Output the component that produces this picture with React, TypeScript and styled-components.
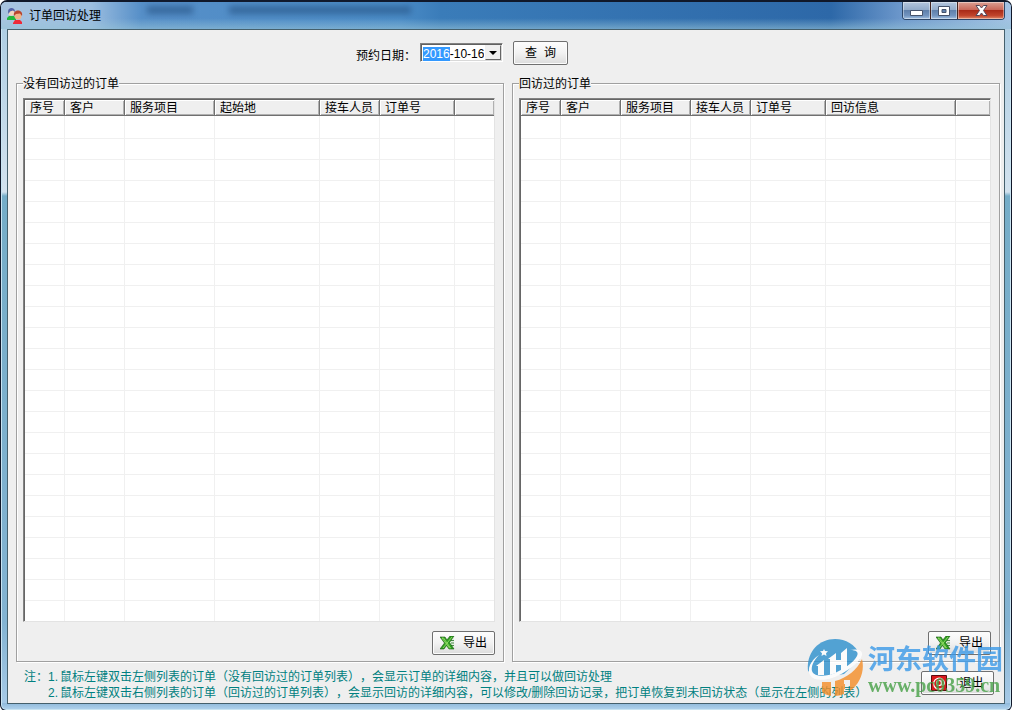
import React, { useEffect, useRef } from 'react';
import styled, { createGlobalStyle, css } from 'styled-components';

const Global = createGlobalStyle`
  *, *::before, *::after { box-sizing: border-box; }
  html, body, #root { height: 100%; }
  body {
    margin: 0;
    background: #fff;
    color: #000;
    font: 12px/16px "Liberation Sans", "Noto Sans CJK SC", sans-serif;
    text-spacing-trim: space-all;
  }
  button, input { font: inherit; color: inherit; }
`;

const Window = styled.div`
  position: relative;
  display: flex;
  flex-direction: column;
  min-height: 100%;
  padding: 0 6px 6px;
  border: 1px solid #10182a;
  border-top-width: 2px;
  border-radius: 7px 7px 6px 6px;
  background:
    linear-gradient(#8fb9da, #b3d4ee) 0 100% / 100% 7px no-repeat,
    linear-gradient(#a9cbe2, #d2e2ee 190px, #75adc8 194px, #83b3d2 620px, #a9cbe8);
  box-shadow: inset 0 0 0 1px #c9e4f2;
`;

const TitleBar = styled.header`
  display: flex;
  align-items: center;
  height: 27px;
  margin: 0 -6px;
  padding-left: 6px;
  border-radius: 5px 5px 0 0;
  background:
    linear-gradient(transparent 60%, rgba(150, 195, 215, 0.6)),
    linear-gradient(90deg, #a8c4e0, #9cbee0 90px, #568fc8 140px, #4a8bc6 400px, #3a7cb9 440px, #2d68a8 830px, #6c97cb 900px, #a4c3e4);
`;

const Title = styled.h1`
  margin: 0 0 0 6px;
  font-size: 12px;
  line-height: 16px;
  font-weight: 400;
`;

const Ghost = styled.div`
  display: flex;
  gap: 36px;
  flex: 1;
  height: 27px;
  padding-left: 46px;
`;

const Smudge = styled.i<{ $w: number }>`
  width: ${p => p.$w}px;
  height: 8px;
  margin-top: 4px;
  background: #234f80;
  opacity: 0.6;
  filter: blur(3px);
`;

const Controls = styled.div`
  display: flex;
  align-self: flex-start;
  height: 18px;
  margin-right: 6px;
  border: 1px solid #2c4668;
  border-top: 0;
  border-radius: 0 0 4px 4px;
  overflow: hidden;
`;

const ControlButton = styled.button<{ $close?: boolean }>`
  display: flex;
  align-items: center;
  justify-content: center;
  width: ${p => (p.$close ? 47 : 27)}px;
  padding: 0;
  border: 0;
  box-shadow: inset 0 0 0 1px rgba(255, 255, 255, 0.4);
  background: ${p =>
    p.$close
      ? 'linear-gradient(#dba093, #c9685a 45%, #a92b18 50%, #c1452c 80%, #e08a6a)'
      : 'linear-gradient(#b4c6de, #93abca 45%, #5f80ab 50%, #7294bf 80%, #a2c0e0)'};
  & + & { border-left: 1px solid ${p => (p.$close ? '#43241f' : '#3f5a80')}; }
`;

const Client = styled.main`
  display: flex;
  flex: 1;
  flex-direction: column;
  padding: 10px 4px 2px 8px;
  border: 1px solid #45606c;
  background: #efefef;
`;

const Filter = styled.form`
  display: flex;
  align-items: center;
  height: 25px;
  padding-left: 340px;
`;

const FilterLabel = styled.label`
  padding-top: 6px;
`;

const DateBox = styled.div`
  display: flex;
  width: 83px;
  height: 19px;
  margin: 0 10px 0 4px;
  border: 1px solid;
  border-color: #828282 #fff #fff #828282;
  background: #fff;
  box-shadow: inset 1px 1px #606060, inset -1px -1px #d8d8d8;
`;

const DateInput = styled.input`
  flex: 1;
  min-width: 0;
  padding: 3px 0 0 2px;
  border: 0;
  outline: 0;
  background: none;
  line-height: 14px;
  caret-color: transparent;
  &::selection { background: #3399ff; color: #fff; }
`;

const Drop = styled.button`
  display: flex;
  align-items: center;
  justify-content: center;
  width: 16px;
  margin: 1px;
  padding: 0;
  border: 1px solid;
  border-color: #eee #666 #666 #eee;
  background: #efefef;
`;

const PushButton = styled.button<{ $size: 'query' | 'export' | 'exit' }>`
  display: flex;
  align-items: center;
  justify-content: center;
  gap: 8px;
  height: 24px;
  padding: 0;
  border: 1px solid #707070;
  border-radius: 2px;
  box-shadow: inset 0 0 0 1px #fcfcfc;
  background: linear-gradient(#fdfdfd, #f2f2f2 50%, #dcdcdc);
  ${p => p.$size === 'query' && css`
    width: 55px;
    padding-top: 2px;
    font-family: "Liberation Mono", "Noto Sans CJK SC", monospace;
  `}
  ${p => p.$size === 'export' && css`width: 63px;`}
  ${p => p.$size === 'exit' && css`width: 73px; gap: 12px; margin-top: 2px;`}
`;

const Panels = styled.div`
  display: flex;
  flex: 1;
  gap: 8px;
  margin-top: 9px;
`;

const Panel = styled.fieldset`
  display: flex;
  flex: 1;
  flex-direction: column;
  min-width: 0;
  margin: 0;
  padding: 6px 8px 6px 6px;
  border: 1px solid #a0a0a0;
  box-shadow: 1px 1px #fff, inset 1px 1px #fff;
`;

const Legend = styled.legend`
  margin: 0;
  padding: 2px 0 0;
  background: #efefef;
  line-height: 16px;
`;

const ListView = styled.div`
  display: flex;
  flex: 1;
  flex-direction: column;
  border: 1px solid;
  border-color: #828282 #e3e3e3 #e3e3e3 #828282;
  background: #fff;
  box-shadow: inset 1px 1px #666;
  padding: 1px 0 0 1px;
  overflow: hidden;
`;

const Grid = styled.table`
  flex: 1;
  width: 100%;
  table-layout: fixed;
  border-collapse: separate;
  border-spacing: 0;
`;

const HeadCell = styled.th`
  height: 16px;
  padding: 2px 0 0 5px;
  border-right: 1px solid #707070;
  border-bottom: 1px solid #707070;
  background: #efefef;
  box-shadow: inset 1px 1px #fff, inset -1px -1px #b0b0b0;
  font-weight: 400;
  line-height: 13px;
  text-align: left;
  vertical-align: bottom;
  white-space: nowrap;
  &:last-child { border-right: 0; }
`;

const Cell = styled.td`
  height: 21px;
  padding: 0;
  border-right: 1px solid #f0f0f0;
  border-bottom: 1px solid #f0f0f0;
  &:last-child { border-right: 0; }
  tr:first-child > & { height: 23px; }
  tr:last-child > & { height: 20px; border-bottom: 0; }
`;

const PanelActions = styled.div`
  display: flex;
  justify-content: flex-end;
  margin-top: 9px;
`;

const Footer = styled.footer`
  display: flex;
  align-items: flex-start;
  justify-content: space-between;
  padding: 7px 6px 0 8px;
`;

const Notes = styled.div`
  display: grid;
  grid-template-columns: 24px 12px 1fr;
  align-content: start;
  color: #008080;
  white-space: nowrap;
`;

const NoteNumber = styled.span`
  grid-column: 2;
`;

const Watermark = styled.div`
  position: absolute;
  right: 8px;
  bottom: 13px;
  display: flex;
  align-items: center;
  gap: 5px;
  opacity: 0.8;
  pointer-events: none;
`;

const Brand = styled.div`
  color: #3b9ae8;
  font: 700 27px/34px "Noto Sans CJK SC", sans-serif;
`;

const Site = styled.div`
  color: #46a046;
  font: 700 20px/20px "Liberation Serif", serif;
`;

const AppIcon = () => (
  <svg width="16" height="16" viewBox="0 0 16 16" aria-hidden="true">
    <path d="M0 10 2 8h5l2 2v2H0z" fill="#20b83c" />
    <circle cx="4.500" cy="4.500" r="3.300" fill="#f0d6c0" />
    <path d="M1 4C1 1 2.500 0 4.500 0S8 1 8 4L6 2.500 3 3.500 1.500 6z" fill="#5463a8" />
    <path d="M6 15 8 12h5l2 2v2H6z" fill="#ee2a38" />
    <circle cx="11" cy="8" r="3.500" fill="#f0b488" />
    <path d="M7 8c-1-4 2-5.500 4-5.500S16 4 15 8l-2-2.500-4 .5z" fill="#b9452d" />
  </svg>
);

const ExcelIcon = () => (
  <svg width="15" height="14" viewBox="0 0 15 14" aria-hidden="true">
    <path d="M7 2h7v10H7z" fill="#e4f2df" />
    <path d="M11 4.500h3M11 7h3M11 9.500h3" stroke="#4d8a4d" />
    <path d="M0 1h5l2 3 3-4h4L9.500 6.500 14 13H9L6.500 9.500 4 13H0l4.500-6z" fill="#2f9e22" stroke="#17570f" strokeWidth=".6" />
    <path d="M2 2h1.500l7 10H9.500zM12 1 3 12" fill="none" stroke="#94dc68" strokeWidth=".9" />
  </svg>
);

const ExitIcon = () => (
  <svg width="16" height="16" viewBox="0 0 16 16" aria-hidden="true">
    <path d="M.5.500h15v15H.5z" fill="#d9181c" stroke="#5a0c10" />
    <path d="M12 12.500A5.500 5.500 0 1 1 13.500 8c0 2.500-3 3-3 .8V5.500" fill="none" stroke="#fff" strokeWidth="1.200" />
    <circle cx="8" cy="8" r="2.500" fill="none" stroke="#fff" strokeWidth="1.200" />
  </svg>
);

const BrandLogo = () => (
  <svg width="56" height="58" viewBox="0 0 56 58" aria-hidden="true">
    <path d="M1 32C-1 14 11 0 28 0c11 0 20 6 24 14l1 6-16 15-24 4z" fill="#2b8fcd" />
    <path d="M55 20c3 12-2 25-12 32V41h-6v14c-3 1-6 2-9 2V42c12-3 22-11 27-22z" fill="#f58d26" />
    <path d="M15 43h9v14c-4-1-7-2-9-4zM28 45h10v5H28z" fill="#f58d26" />
    <path d="M12 16C3 22 0 30 3 36c5 8 21 5 33-2s20-15 19-20c-1-4-7-4-12-3 6 0 9 2 7 6-3 6-13 13-22 17S7 38 5 32c-1-4 1-10 7-16z" fill="#fff" />
    <path d="m9 27 8-6v15h-6V27zM21 20l8-6v20l-6 2V20zM29 21h5v-7l6-5v20l-6 3v-6h-5z" fill="#fff" />
    <path d="m17 10 1 2 3 .3-2 2 .5 2.700L17 15.500 14.500 17l.5-2.700-2-2 3-.3z" fill="#fff" />
  </svg>
);

interface Column { name: string; width?: number }

const PENDING: Column[] = [
  { name: '序号', width: 40 }, { name: '客户', width: 60 }, { name: '服务项目', width: 90 },
  { name: '起始地', width: 105 }, { name: '接车人员', width: 60 }, { name: '订单号', width: 75 }, { name: '' },
];

const VISITED: Column[] = [
  { name: '序号', width: 40 }, { name: '客户', width: 60 }, { name: '服务项目', width: 70 },
  { name: '接车人员', width: 60 }, { name: '订单号', width: 75 }, { name: '回访信息', width: 130 }, { name: '' },
];

const ROWS = Array.from({ length: 24 }, (_, i) => i);

const OrderPanel = ({ title, columns }: { title: string; columns: Column[] }) => (
  <Panel>
    <Legend>{title}</Legend>
    <ListView>
      <Grid aria-label={title}>
        <colgroup>
          {columns.map((c, i) => <col key={i} width={c.width} />)}
        </colgroup>
        <thead>
          <tr>{columns.map((c, i) => <HeadCell key={i} scope="col">{c.name}</HeadCell>)}</tr>
        </thead>
        <tbody>
          {ROWS.map(r => (
            <tr key={r}>{columns.map((_, i) => <Cell key={i} />)}</tr>
          ))}
        </tbody>
      </Grid>
    </ListView>
    <PanelActions>
      <PushButton type="button" $size="export"><ExcelIcon />导出</PushButton>
    </PanelActions>
  </Panel>
);

export default function App() {
  const date = useRef<HTMLInputElement>(null);

  useEffect(() => {
    date.current?.focus();
    date.current?.setSelectionRange(0, 4);
  }, []);

  return (
    <>
      <Global />
      <Window>
        <TitleBar>
          <AppIcon />
          <Title>订单回访处理</Title>
          <Ghost aria-hidden="true"><Smudge $w={46} /><Smudge $w={182} /></Ghost>
          <Controls>
            <ControlButton aria-label="最小化">
              <svg width="13" height="10"><path d="M.5 4.500h12v5H.5z" fill="#fff" stroke="#46536b" /></svg>
            </ControlButton>
            <ControlButton aria-label="最大化">
              <svg width="12" height="10"><path d="M.5.500h11v9H.5zM4 3.500h4v3H4z" fill="#fff" fillRule="evenodd" stroke="#46536b" /></svg>
            </ControlButton>
            <ControlButton $close aria-label="关闭">
              <svg width="13" height="11"><path d="M1 .500h3.500l2 2.500 2-2.500H12L8.500 5.500l3.500 5H8.500l-2-2.500-2 2.500H1l3.500-5z" fill="#fff" stroke="#53485a" /></svg>
            </ControlButton>
          </Controls>
        </TitleBar>
        <Client>
          <Filter onSubmit={e => e.preventDefault()}>
            <FilterLabel htmlFor="order-date">预约日期：</FilterLabel>
            <DateBox>
              <DateInput id="order-date" ref={date} defaultValue="2016-10-16" />
              <Drop type="button" aria-label="选择日期">
                <svg width="8" height="4"><path d="M0 0h8L4 4z" /></svg>
              </Drop>
            </DateBox>
            <PushButton type="submit" $size="query">查 询</PushButton>
          </Filter>
          <Panels>
            <OrderPanel title="没有回访过的订单" columns={PENDING} />
            <OrderPanel title="回访过的订单" columns={VISITED} />
          </Panels>
          <Footer>
            <Notes>
              <span>注：</span>
              <NoteNumber>1.</NoteNumber>
              <span>鼠标左键双击左侧列表的订单（没有回访过的订单列表），会显示订单的详细内容，并且可以做回访处理</span>
              <NoteNumber>2.</NoteNumber>
              <span>鼠标左键双击右侧列表的订单（回访过的订单列表），会显示回访的详细内容，可以修改/删除回访记录，把订单恢复到未回访状态（显示在左侧的列表）</span>
            </Notes>
            <PushButton type="button" $size="exit"><ExitIcon />退出</PushButton>
          </Footer>
        </Client>
        <Watermark aria-hidden="true">
          <BrandLogo />
          <div>
            <Brand>河东软件园</Brand>
            <Site>www.pc0359.cn</Site>
          </div>
        </Watermark>
      </Window>
    </>
  );
}
